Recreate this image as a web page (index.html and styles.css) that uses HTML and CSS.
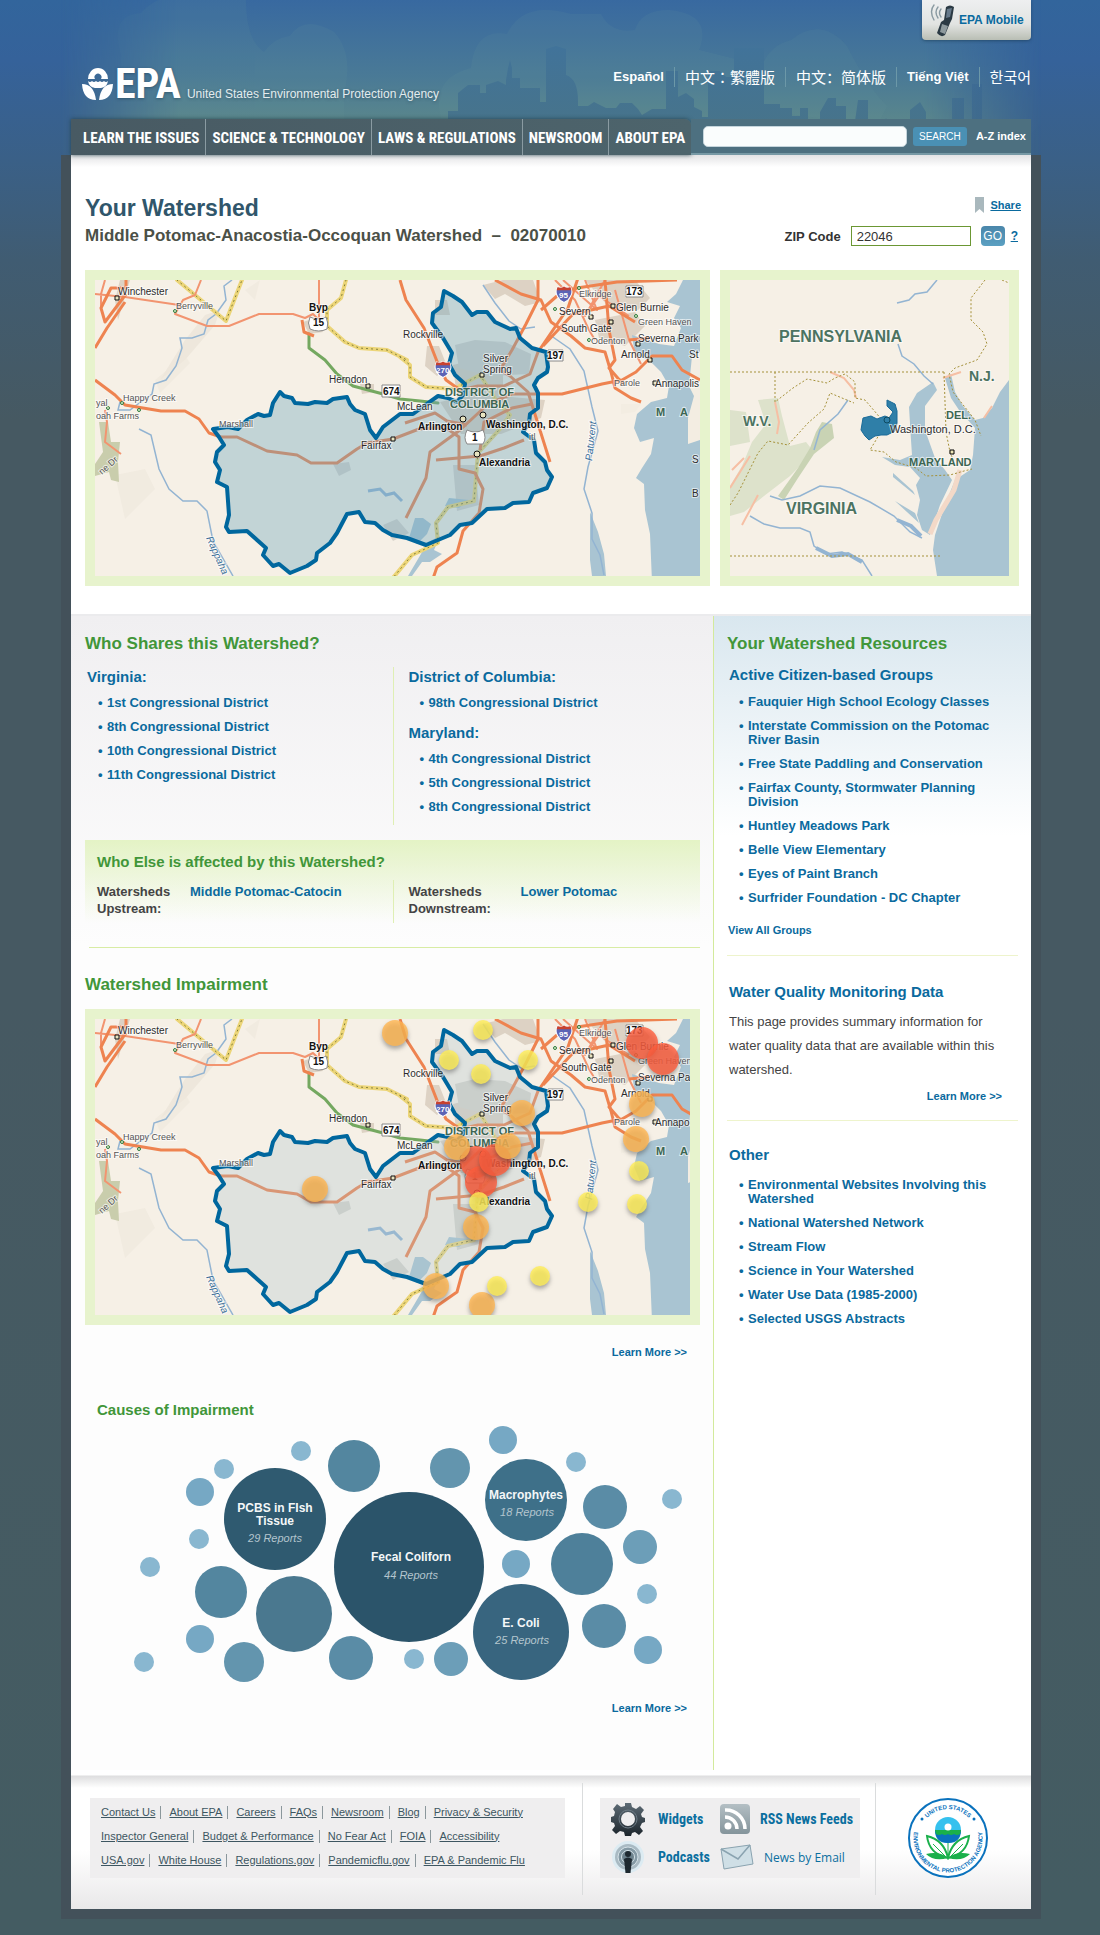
FILE: index.html
```html
<!DOCTYPE html>
<html lang="en">
<head>
<meta charset="utf-8">
<meta name="viewport" content="width=device-width, initial-scale=1">
<title>Your Watershed | US EPA</title>
<link rel="stylesheet" href="styles.css">
</head>
<body>
<svg class="defs" width="0" height="0" aria-hidden="true">
  <defs>
    <symbol id="shield" viewBox="0 0 16 16">
      <path d="M2 1q3 1.500 6-.5q3 2 6 .5q3 5 0 9q-2 4-6 5.500q-4-1.500-6-5.500q-3-4 0-9z" fill="#5b63b5" stroke="#fff"/>
      <path d="M2 1q3 1.500 6-.5q3 2 6 .5l1 3h-14z" fill="#c8412f"/>
    </symbol>
    <symbol id="basin" viewBox="0 0 605 296">
      <rect width="605" height="296" fill="#f6f0e6"/>
      <g fill="#e9e2d6" opacity=".6">
        <path d="M90 60l20-25 15-5-5 15-30 35-25 20z"/>
        <path d="M60 100l30-25 5 8-30 30zM20 195l30-6 10 20-30 30zM150 10l15-10-5 20z" opacity=".6"/>
      </g>
      <g fill="#ddd2c4">
        <path d="M20 20l5-20 10 0-12 40zM208 42l12-4 8 14-14 2zM340 20l12 0 3 15-15 0zM332 66l12 0 8 20-10 10-12-10zM388 5l20-5 30 0 8 22-16 4-20-12-10 5zM490 0l50 0 15 18-12 12-30-4zM500 40l40 -8 10 14-20 20-26-8zM358 85l20-5 30 10 0 20-20 25-25-8zM265 104l14 0 0 8-12 2zM345 122l35-8 70 6-4 18-40 16-40 0z"/>
      </g>
      <path d="M360 65l20-5 30 2 26 12-2 20-40 2-30-8zM358 185l22 0 4 40-22 6zM238 184l16-2 2 8-12 6zM288 245l14-6 12 14-16 8z" fill="#d9d4cb"/>
      <path d="M4 142l9 0 3 20 9 0-2 20 1 20-8-2-2-8-14 4v-12l8-12z" fill="#c9cdac"/>
      <g fill="#a9c4d2">
        <path d="M605 0h-17l-7 14-9 8 13 4-6 12 7 10-7 18-15-2-27-9 3 20 14 5 12 12 8 14-2 12-16 4-14 12-3 14 6 14 14-4-3 16-9 14-6 10 8 6 1 26 5 24 2 48h53z"/>
        <path d="M320 238l8 0 8 6-4 10-10 10-8-6zM333 262l12-6-6 14 8 4-12 8-8 0-10 14-4 0zM354 218l20 2-10 8-14-2zM495 232l8 20 6 22 2 22h-14l-2-16z"/>
      </g>
      <path d="M605 72l-8 4-3 30 5 10-6 22 0 26 12-4zM526 124l20 0-6 8-14 2z" fill="#f3ede2"/>
      <g fill="none" stroke="#93b4d2" stroke-width="1.500">
        <path d="M137 0l-8 6 2 14-10 14-8 6-4 14-12 4-12 0 2 10-6 18-10 14-12 4-2 10-14 10-8 6-12 0 2-8M44 149l12 6 8 34 10 20 14 12 14 0 10 10 6 30 20 35" />
        <path d="M388 5l12 18 14 18 12 8 14-2M455 55l20 14 14 22 8 36 6 24-10 36-4 22 8 24 0 26 8 16 4 20"/>
      </g>
      <path d="M273 211l12-2 6 6 8-2 8 8" fill="none" stroke="#93b4d2" stroke-width="3"/>
      <g fill="none" stroke-linejoin="round" stroke-linecap="round">
        <path d="M82 0l49 41 16-41M251 0l-5 18-14 12 0 16 18 16 14 6 28 2 20 10M305 77l10 8 0 12 16 10 28 2 26-14M385 95l18 28 12 12-10 14-22 24-4 48-26 6-12 16 2 20-26 12-30 36" stroke="#ecd578" stroke-width="4"/>
        <path d="M82 0l49 41 16-41M251 0l-5 18-14 12 0 16 18 16 14 6 28 2 20 10M305 77l10 8 0 12 16 10 28 2 26-14M385 95l18 28 12 12-10 14-22 24-4 48-26 6-12 16 2 20-26 12-30 36" stroke="#7d7a35" stroke-width="1" stroke-dasharray="1 4"/>
        <path d="M214 54l0 14 16 12 12 14 16 12 30 8 17 5 20 2 18 2" stroke="#74a860" stroke-width="3"/>
      </g>
      <g class="road-thin">
        <path d="M10 0l-4 14 0 14M106 0l-6 15-12 5-8 14 32 12 22 0 30-12 34 0 12 4 8 -4 6 6M0 14l30 3 54 8M224 0v38M10 130l2 12-2 20 16 12"/>
        <path d="M460 0l20 20 14 30 6 10M510 0l-20 36 14-20 30 20M520 10l14 50 12 24M468 0l34 30-12-30"/>
      </g>
      <g class="road">
        <path d="M31 0l0 8-15 0-10 20 4 14 21-28M0 68l12-20 18-26M0 100l20 15 10 10 36 6 24 0 14 8 10 14 12 4 16 0 30 14 30 4 14 8 26 0 20-14 10-6 26-4 26-10 26-2 14 10 0 32 16 4 8 16-4 24-16 18-6 22-20 14-16 46"/>
        <path d="M207 40l2 12 10 4M305 0l6 20 18 28 14 36 8 16 14 10 18-4 26 0 26-12 8-22 30-44 10-30M400 0l26 14 20 6 10 22 20 14 14 12 20 4 6 20 4 16 16 10 10 4M443 0l0 20-12 24-14 26-12 20 10 6 18 16 22 70"/>
        <path d="M605 100l-18-10-10-14-20 0-16 16-14 8-20 4-40 10-50 0-24 10-28 26-30 22-4 26-10 20-10 20M341 180l44-4 24-8 20-8M372 145l-20-4-12-8-30 10M385 170l4-28 28-14 20-4M446 30l16-14 20-8 40-6 60-2M510 0l4 50 6 30-6 8 14 16M534 60l20-2M448 66l30-32 36-8 26 16"/>
      </g>
      <path fill="currentColor" stroke="#00679e" stroke-width="4" stroke-linejoin="round" d="M118 149l15-2 10 2 9-9 11-6 6 2 6-1 3-12 7-11 4 4 8 2 3 5 13 1 7-2 12 1 6-4 14-2 3 7 5 6 10 4 5 16 6 8 7-11 17-13h13l15-11 10-7 10 2 9 4 6-7 2-11-10-9-6-11 3-11-9-15-11-15 1-10 8-6 3-16 9 5 9 6 10 13 5-3h10l8 10 15 7 6-1 4 10 12 10 14 4 2 15-1 5-9 6-4 7 4 8v15l-8 6-1 9-6 9 11 8 2 13 9 9 2 8 5 7-5 11-14 5-4 9-16 1-8 5-18 1-15 14-12 2-10 10-24 10-19-7-15-3-9-5-8-7-10-1-6-10-12 2-10 19-7 10-13 10-1 7-9 6-17 7-11-9-6 2-10-11 3-7-19-17-18 1-3-5 3-12-2-28-10-5 3-12-5-8 2-10 7-7-5-8z"/>
    </symbol>
    <path id="ring-top" d="M-29 0a29 29 0 0 1 58 0"/>
    <path id="ring-bottom" d="M-28.300 -19.800a34.500 34.500 0 1 0 56.600 0"/>
    <linearGradient id="metal" x1="0" y1="0" x2="0" y2="1"><stop offset="0" stop-color="#5d6b75"/><stop offset="1" stop-color="#1c252c"/></linearGradient>
    <linearGradient id="silver" x1="0" y1="0" x2="0" y2="1"><stop offset="0" stop-color="#b4bfc4"/><stop offset="1" stop-color="#84949b"/></linearGradient>
  </defs>
</svg>

<div class="page">
  <header class="masthead">
    <svg class="sky" viewBox="0 0 980 155" preserveAspectRatio="none" aria-hidden="true">
      <defs>
        <linearGradient id="glow" x1="0" y1="0" x2="0" y2="1"><stop offset="0" stop-color="#3869a0"/><stop offset=".5" stop-color="#4a7a96"/><stop offset=".8" stop-color="#5b878b"/><stop offset="1" stop-color="#557f88"/></linearGradient>
        <linearGradient id="bldg" x1="0" y1="0" x2="0" y2="1"><stop offset="0" stop-color="#41739a"/><stop offset="1" stop-color="#4a7483"/></linearGradient>
      </defs>
      <rect width="980" height="155" fill="url(#glow)"/>
      <g fill="#6f9f9e" opacity=".1">
        <path d="M60 155v-100q-12-40 20-42q20-24 60-13h45q0 40 18 52q10-14 26-16q14-22 44-4q20 22 10 60v63z"/>
        <path d="M380 118q-10-40 30-50q4-40 36-34q16-34 64-20h30q10 20 34 16q6-20 34-20q44 4 30 40l40 10 10 60z"/>
        <path d="M700 110q-10-60 30-70q30-24 56 6q20 40 40 60l-10 20z"/>
      </g>
      <path fill="url(#bldg)" d="M387 119v-8h10v-18l10-8h12v8h6v-8l12-4 8 4v-5l2-12 2-8 2 8v10h8v10h20v14h6v-53l10-3 10 3v26q12 4 12 26v5h10l6-4 12 6h10l4-5h12l6 6 4 6 10-6h14v-38h12v26l8-4 8 6v8l8 4v6h6v-46h12l6 6h8v-29h30v56h16v4h12v8h8v-8h8v16h12v-12l8-14h8v8h10v22h8l4-28h10v28h14l4-10 6 14h18v-22l10-8 6 10v20h14v-6h12v-28h12v28h8v-42h10v36l12 6v12h12l4-10v-8h14l6 14 10-10 8 14h12v-10l30 12v24h-620z"/>
    </svg>
    <a class="mobile-tab" href="#">
      <svg width="26" height="34" viewBox="0 0 26 34" aria-hidden="true">
        <g fill="none" stroke="#8a9aa2" stroke-width="1.400" stroke-linecap="round"><path d="M5 2q-5 6 0 15M9 4q-4 5 0 11M12 6q-3 4 0 8"/></g>
        <path d="M17 4q4-3 8 0l-2 12-2 4-5 12q-4 3-8-2l4-11 3-2z" fill="#2b3a44"/>
        <path d="M18 6l5-1-2 9-4 1z" fill="#66798a"/><path d="M13 21l6 2-3 8-5-2z" fill="#8e9a9e"/>
      </svg>
      EPA Mobile
    </a>
    <div class="brand-row">
      <a class="brand" href="#">
        <svg width="31" height="32" viewBox="0 0 31 32" aria-hidden="true" fill="#fff">
          <path d="M6 11a10 11 0 0 1 20 0h-7a3.500 3.500 0 1 0-6 0z"/>
          <path d="M6 13q2 2 4 0q2 2 4 0q2 2 4 0q2 2 4 0q2 2 4 0q-1 6-7 7h-6q-6-1-7-7z"/>
          <path d="M0 16q12 0 14 16q-13 0-14-16zM31 16q-12 0-14 16q13 0 14-16z"/>
        </svg>
        <span class="wordmark">EPA</span>
        <span class="tagline">United States Environmental Protection Agency</span>
      </a>
      <ul class="languages">
        <li><a href="#" lang="es">Español</a></li>
        <li class="cjk"><a href="#" lang="zh-Hant">中文：繁體版</a></li>
        <li class="cjk"><a href="#" lang="zh-Hans">中文：简体版</a></li>
        <li><a href="#" lang="vi">Tiếng Việt</a></li>
        <li class="cjk"><a href="#" lang="ko">한국어</a></li>
      </ul>
    </div>
    <div class="nav-row">
      <nav class="main-nav">
        <a href="#">LEARN THE ISSUES</a>
        <a href="#">SCIENCE &amp; TECHNOLOGY</a>
        <a href="#">LAWS &amp; REGULATIONS</a>
        <a href="#">NEWSROOM</a>
        <a href="#">ABOUT EPA</a>
      </nav>
      <form class="search">
        <input type="text" aria-label="Search">
        <button type="button">SEARCH</button>
        <a href="#">A-Z index</a>
      </form>
    </div>
  </header>

  <div class="sheet">
    <main>
      <section class="intro">
        <div class="title-row">
          <h1>Your Watershed</h1>
          <a class="share" href="#"><svg width="9" height="16" viewBox="0 0 9 16" aria-hidden="true"><path d="M0 0h9v16l-4.500-4-4.500 4z" fill="#a9b8bd"/></svg><span>Share</span></a>
        </div>
        <div class="title-row">
          <p class="subtitle">Middle Potomac-Anacostia-Occoquan Watershed&nbsp; –&nbsp; 02070010</p>
          <form class="zip">
            <label for="zip">ZIP Code</label>
            <input id="zip" type="text" value="22046">
            <button type="button">GO</button>
            <a href="#">?</a>
          </form>
        </div>
        <div class="maps">
          <div class="frame">
            <svg viewBox="0 0 605 296" preserveAspectRatio="xMinYMin slice" class="map tint-strong" role="img" aria-label="Watershed map">
              <use href="#basin" width="605" height="296"/>
              <g class="badges">
                <path d="M215 37q8 4 16 0q3 6 1 12q-8 4-17 0q-3-6 0-12zM287 105h18v12h-18zM372 150q8 4 16 0q4 8 0 14h-16q-4-6 0-14zM531 6h17v11h-17zM453 70h15v11h-15z"/>
              </g>
              <use href="#shield" x="460" y="6" width="18" height="17"/><use href="#shield" x="339" y="81" width="18" height="17"/>
              <g class="dots"><path d="M20 16h4v4h-4zM271 104h4v4h-4zM296 157h4v4h-4zM385 93h4v4h-4zM494 35h4v4h-4zM516 24h4v4h-4zM514 40h4v4h-4zM541 62h4v4h-4zM553 78h4v4h-4zM558 101h4v4h-4z"/><circle cx="368" cy="139" r="3"/><circle cx="388" cy="135" r="3"/><circle cx="382" cy="174" r="3"/></g>
              <g class="dots small"><circle cx="80" cy="31" r="1.500"/><circle cx="27" cy="123" r="1.500"/><circle cx="13" cy="128" r="1.500"/><circle cx="44" cy="130" r="1.500"/><circle cx="460" cy="29" r="1.500"/><circle cx="484" cy="8" r="1.500"/><circle cx="541" cy="36" r="1.500"/><circle cx="494" cy="60" r="1.500"/></g>
              <g class="town">
                <text x="23" y="15">Winchester</text><text x="234" y="103">Herndon</text><text x="308" y="58">Rockville</text>
                <text x="388" y="82">Silver</text><text x="388" y="93">Spring</text><text x="464" y="35">Severn</text><text x="466" y="52">South Gate</text>
                <text x="521" y="31">Glen Burnie</text><text x="543" y="62">Severna Park</text><text x="526" y="78">Arnold</text><text x="560" y="107">Annapolis</text>
                <text x="302" y="130">McLean</text><text x="266" y="169">Fairfax</text><text x="594" y="78">St</text><text x="597" y="183">S</text><text x="597" y="217">B</text>
              </g>
              <g class="hamlet">
                <text x="81" y="29">Berryville</text><text x="28" y="121">Happy Creek</text><text x="1" y="126">yal</text><text x="1" y="139">oah Farms</text>
                <text x="124" y="147">Marshall</text><text x="484" y="17">Elkridge</text><text x="543" y="45">Green Haven</text><text x="496" y="64">Odenton</text><text x="519" y="106">Parole</text><text x="434" y="160">itl</text>
              </g>
              <g class="city">
                <text x="214" y="31">Byp</text><text x="218" y="46">15</text><text x="288" y="115">674</text><text x="531" y="15">173</text><text x="452" y="79">197</text><text x="377" y="161">1</text>
                <text x="323" y="150">Arlington</text><text x="391" y="148">Washington, D.C.</text><text x="384" y="186">Alexandria</text>
                <text x="464" y="18" class="on-shield">95</text><text x="341" y="93" class="on-shield">270</text>
              </g>
              <g class="state"><text x="350" y="116">DISTRICT OF</text><text x="355" y="128">COLUMBIA</text><text x="561" y="136">M</text><text x="585" y="136">A</text></g>
              <g class="river"><text transform="translate(111 258) rotate(66)">Rappaha</text><text transform="translate(497 181) rotate(-84)">Patuxent</text></g>
              <text class="hamlet" transform="translate(7 195) rotate(-42)">ne Dr</text>
            </svg>
          </div>
          <div class="frame">
            <svg viewBox="0 0 279 296" preserveAspectRatio="xMinYMin slice" class="map" role="img" aria-label="Regional map">
              <rect width="279" height="296" fill="#f6f0e6"/>
              <path d="M28 120l20-2 4 18 8 30 16-4 8 10-24 24-26 20-20 16-14 4v-30l12-20 10-24 14-18zM0 130l16 2 4 30-20 4z" fill="#dde2cb"/>
              <path d="M92 142l10 2 2 14-20 16-16 24-14 22-6-4 20-28 12-20 6-16z" fill="#c9d3b4"/>
              <path d="M203 102l-16 11-8 14 2 33 1 15-12 5-18-3 13 8 15 2 10 11-4 7 4 15-3 15 5 15 8 5 10-30 12-25-7-10-10-12-10-28 0-24 12-16zM279 100l-9 12-8 16-9 10-8 2-12-14-8-14-4-18-6 4 6 20 8 12 16 18-2 27-3 15-15 10-10 25-10 30-2 15 4 26h72zM163 193l20 18 2 4-22-18zM165 221l20 12 4 10z" fill="#a9c4d2"/>
              <path d="M230 190l-6 20-18 30-6 14" fill="none" stroke="#f3d9c8" stroke-width="5"/>
              <g fill="none" stroke="#93b4d2" stroke-width="1.500">
                <path d="M207 0l-10 12-12 2-6 6-12 3M168 64l4 12 12 8 10 12 9 8M118 120l-10 14-18 16-6 20M40 216l12 4 18-4 20-10 20 2 30 14 24 14 16 16 12 6M20 236l14 8 16 4 20 0 10 4 4 14 12 8 16-2 20 8 10 16"/>
              </g>
              <path d="M86 268l16 8 16-2 14 8M167 240l14 6 10 10" fill="none" stroke="#93b4d2" stroke-width="4"/>
              <g fill="none" stroke="#f6bfa4" stroke-width="2"><path d="M100 92l14 6 10 12 2 8M45 122l4 20-2 12M213 98l18-6M0 208l20-32M2 190l12-12M28 215l-16 30M254 138l8-12"/></g>
              <g class="border-line">
                <path d="M0 92h214M45 92v30l18-14 14-9 20 4 8-5 10-4 10 8 0 16 10 2 12 14 8 10M0 225l8-12 20-40 10-12 20 4 20-22 16-14 6-16 24 10M214 92l2 60 4 20 4 10M255 0l-14 18 0 22 12 12 4 12-10 16-22 8-6 6 4 18 22 28 6 16M152 150l-12 20 14 2 12 10 20 6 10 8 24-1 14-4 8-2M0 276h210M272 0l7 3"/>
              </g>
              <path d="M133 138l8-2 6 3 8-3 4 2 4-6-6-6 0-6 8 4 2 7 0 12-2 8-8 4-6 0-6 1-6 4-4-4-4-6z" fill="#2f7fa8" stroke="#1a6a98"/>
              <circle cx="157" cy="140" r="3" fill="none" stroke="#0e4a60"/><path d="M220 170h4v4h-4z" fill="#efe9b8" stroke="#000"/>
              <g class="region"><text x="49" y="62">PENNSYLVANIA</text><text x="56" y="234">VIRGINIA</text></g>
              <g class="region small"><text x="239" y="101">N.J.</text><text x="13" y="146">W.V.</text></g>
              <g class="state"><text x="216" y="139">DEL.</text><text x="179" y="186">MARYLAND</text></g>
              <text class="town capital" x="160" y="153">Washington, D.C.</text>
            </svg>
          </div>
        </div>
      </section>

      <div class="columns">
        <div class="primary">
          <h2>Who Shares this Watershed?</h2>
          <div class="districts">
            <div>
              <h3>Virginia:</h3>
              <ul class="links">
                <li><a href="#">1st Congressional District</a></li>
                <li><a href="#">8th Congressional District</a></li>
                <li><a href="#">10th Congressional District</a></li>
                <li><a href="#">11th Congressional District</a></li>
              </ul>
            </div>
            <div>
              <h3>District of Columbia:</h3>
              <ul class="links"><li><a href="#">98th Congressional District</a></li></ul>
              <h3 class="next">Maryland:</h3>
              <ul class="links">
                <li><a href="#">4th Congressional District</a></li>
                <li><a href="#">5th Congressional District</a></li>
                <li><a href="#">8th Congressional District</a></li>
              </ul>
            </div>
          </div>
          <section class="affected">
            <h3>Who Else is affected by this Watershed?</h3>
            <div class="streams">
              <dl><dt>Watersheds Upstream:</dt><dd><a href="#">Middle Potomac-Catocin</a></dd></dl>
              <dl class="down"><dt>Watersheds Downstream:</dt><dd><a href="#">Lower Potomac</a></dd></dl>
            </div>
          </section>
          <hr>
          <h2>Watershed Impairment</h2>
          <div class="frame impairment">
            <svg viewBox="0 0 596 296" preserveAspectRatio="xMinYMin slice" class="map tint-soft" role="img" aria-label="Impairment map">
              <use href="#basin" width="605" height="296"/>
              <g class="badges">
                <path d="M215 37q8 4 16 0q3 6 1 12q-8 4-17 0q-3-6 0-12zM287 105h18v12h-18zM372 150q8 4 16 0q4 8 0 14h-16q-4-6 0-14zM531 6h17v11h-17zM453 70h15v11h-15z"/>
              </g>
              <use href="#shield" x="460" y="6" width="18" height="17"/><use href="#shield" x="339" y="81" width="18" height="17"/>
              <g class="dots"><path d="M20 16h4v4h-4zM271 104h4v4h-4zM296 157h4v4h-4zM385 93h4v4h-4zM494 35h4v4h-4zM516 24h4v4h-4zM514 40h4v4h-4zM541 62h4v4h-4zM553 78h4v4h-4zM558 101h4v4h-4z"/><circle cx="368" cy="139" r="3"/><circle cx="388" cy="135" r="3"/><circle cx="382" cy="174" r="3"/></g>
              <g class="dots small"><circle cx="80" cy="31" r="1.500"/><circle cx="27" cy="123" r="1.500"/><circle cx="13" cy="128" r="1.500"/><circle cx="44" cy="130" r="1.500"/><circle cx="460" cy="29" r="1.500"/><circle cx="484" cy="8" r="1.500"/><circle cx="541" cy="36" r="1.500"/><circle cx="494" cy="60" r="1.500"/></g>
              <g class="town">
                <text x="23" y="15">Winchester</text><text x="234" y="103">Herndon</text><text x="308" y="58">Rockville</text>
                <text x="388" y="82">Silver</text><text x="388" y="93">Spring</text><text x="464" y="35">Severn</text><text x="466" y="52">South Gate</text>
                <text x="521" y="31">Glen Burnie</text><text x="543" y="62">Severna Pa</text><text x="526" y="78">Arnold</text><text x="560" y="107">Annapo</text>
                <text x="302" y="130">McLean</text><text x="266" y="169">Fairfax</text>
              </g>
              <g class="hamlet">
                <text x="81" y="29">Berryville</text><text x="28" y="121">Happy Creek</text><text x="1" y="126">yal</text><text x="1" y="139">oah Farms</text>
                <text x="124" y="147">Marshall</text><text x="484" y="17">Elkridge</text><text x="543" y="45">Green Haven</text><text x="496" y="64">Odenton</text><text x="519" y="106">Parole</text><text x="434" y="160">itl</text>
              </g>
              <g class="city">
                <text x="214" y="31">Byp</text><text x="218" y="46">15</text><text x="288" y="115">674</text><text x="531" y="15">173</text><text x="452" y="79">197</text><text x="377" y="161">1</text>
                <text x="323" y="150">Arlington</text><text x="391" y="148">Washington, D.C.</text><text x="384" y="186">Alexandria</text>
                <text x="464" y="18" class="on-shield">95</text><text x="341" y="93" class="on-shield">270</text>
              </g>
              <g class="state"><text x="350" y="116">DISTRICT OF</text><text x="355" y="128">COLUMBIA</text><text x="561" y="136">M</text><text x="585" y="136">A</text></g>
              <g class="river"><text transform="translate(111 258) rotate(66)">Rappaha</text><text transform="translate(497 181) rotate(-84)">Patuxent</text></g>
              <text class="hamlet" transform="translate(7 195) rotate(-42)">ne Dr</text>
              <g class="pins">
                <g class="high"><circle cx="547" cy="24" r="16"/><circle cx="568" cy="40" r="16"/><circle cx="381" cy="143" r="16"/><circle cx="386" cy="163" r="16"/><circle cx="400" cy="141" r="16"/></g>
                <g class="mid"><circle cx="300" cy="14" r="13"/><circle cx="220" cy="170" r="13"/><circle cx="427" cy="94" r="13"/><circle cx="362" cy="128" r="13"/><circle cx="413" cy="127" r="13"/><circle cx="547" cy="85" r="13"/><circle cx="541" cy="120" r="13"/><circle cx="381" cy="208" r="13"/><circle cx="341" cy="267" r="13"/><circle cx="387" cy="286" r="13"/></g>
                <g class="low"><circle cx="388" cy="11" r="10"/><circle cx="354" cy="41" r="10"/><circle cx="386" cy="55" r="10"/><circle cx="433" cy="41" r="10"/><circle cx="384" cy="183" r="10"/><circle cx="493" cy="183" r="10"/><circle cx="544" cy="152" r="10"/><circle cx="542" cy="185" r="10"/><circle cx="445" cy="257" r="10"/><circle cx="402" cy="267" r="10"/></g>
              </g>
            </svg>
          </div>
          <p class="more after-map"><a href="#">Learn More &gt;&gt;</a></p>
          <h3 class="causes">Causes of Impairment</h3>
          <svg class="bubbles" viewBox="0 0 615 270" role="img" aria-label="Causes of impairment by number of reports">
            <g fill="#89b7d0"><circle cx="139" cy="49" r="10"/><circle cx="216" cy="31" r="10"/><circle cx="491" cy="42" r="10"/><circle cx="587" cy="79" r="10"/><circle cx="562" cy="174" r="10"/><circle cx="329" cy="239" r="10"/><circle cx="114" cy="119" r="10"/><circle cx="65" cy="147" r="10"/><circle cx="59" cy="242" r="10"/></g>
            <g fill="#76a8c4"><circle cx="115" cy="72" r="14"/><circle cx="418" cy="20" r="14"/><circle cx="563" cy="230" r="14"/><circle cx="431" cy="144" r="14"/><circle cx="115" cy="219" r="14"/></g>
            <g fill="#6c9eb8"><circle cx="555" cy="127" r="17"/><circle cx="366" cy="239" r="17"/></g>
            <g fill="#6395ae"><circle cx="365" cy="48" r="20"/><circle cx="159" cy="242" r="20"/></g>
            <g fill="#5a8ca6"><circle cx="520" cy="87" r="22"/><circle cx="519" cy="206" r="22"/><circle cx="266" cy="238" r="22"/></g>
            <g fill="#53869f"><circle cx="269" cy="46" r="26"/><circle cx="136" cy="172" r="26"/></g>
            <circle cx="497" cy="144" r="31" fill="#4e809a"/><circle cx="209" cy="194" r="38" fill="#4a788f"/>
            <circle cx="441" cy="80" r="41" fill="#3e7089"/><circle cx="436" cy="212" r="48" fill="#38657f"/>
            <circle cx="190" cy="99" r="51" fill="#2f5a70"/><circle cx="324" cy="147" r="75" fill="#2b546a"/>
            <g class="cause"><text x="190" y="92">PCBS in FIsh</text><text x="190" y="105">Tissue</text><text x="326" y="141">Fecal Coliforn</text><text x="441" y="79">Macrophytes</text><text x="436" y="207">E. Coli</text></g>
            <g class="count"><text x="190" y="122">29 Reports</text><text x="326" y="159">44 Reports</text><text x="442" y="96">18 Reports</text><text x="437" y="224">25 Reports</text></g>
          </svg>
          <p class="more"><a href="#">Learn More &gt;&gt;</a></p>
        </div>

        <aside class="resources">
          <h2>Your Watershed Resources</h2>
          <h3 class="groups">Active Citizen-based Groups</h3>
          <ul class="links">
            <li><a href="#">Fauquier High School Ecology Classes</a></li>
            <li><a href="#">Interstate Commission on the Potomac River Basin</a></li>
            <li><a href="#">Free State Paddling and Conservation</a></li>
            <li><a href="#">Fairfax County, Stormwater Planning Division</a></li>
            <li><a href="#">Huntley Meadows Park</a></li>
            <li><a href="#">Belle View Elementary</a></li>
            <li><a href="#">Eyes of Paint Branch</a></li>
            <li><a href="#">Surfrider Foundation - DC Chapter</a></li>
          </ul>
          <p class="view-all"><a href="#">View All Groups</a></p>
          <hr>
          <h3>Water Quality Monitoring Data</h3>
          <p class="summary">This page provides summary information for water quality data that are available within this watershed.</p>
          <p class="more"><a href="#">Learn More &gt;&gt;</a></p>
          <hr>
          <h3 class="other">Other</h3>
          <ul class="links">
            <li><a href="#">Environmental Websites Involving this Watershed</a></li>
            <li><a href="#">National Watershed Network</a></li>
            <li><a href="#">Stream Flow</a></li>
            <li><a href="#">Science in Your Watershed</a></li>
            <li><a href="#">Water Use Data (1985-2000)</a></li>
            <li><a href="#">Selected USGS Abstracts</a></li>
          </ul>
        </aside>
      </div>
    </main>

    <footer class="footer">
      <nav class="panel site-links">
        <ul><li><a href="#">Contact Us</a></li><li><a href="#">About EPA</a></li><li><a href="#">Careers</a></li><li><a href="#">FAQs</a></li><li><a href="#">Newsroom</a></li><li><a href="#">Blog</a></li><li><a href="#">Privacy &amp; Security</a></li></ul>
        <ul><li><a href="#">Inspector General</a></li><li><a href="#">Budget &amp; Performance</a></li><li><a href="#">No Fear Act</a></li><li><a href="#">FOIA</a></li><li><a href="#">Accessibility</a></li></ul>
        <ul><li><a href="#">USA.gov</a></li><li><a href="#">White House</a></li><li><a href="#">Regulations.gov</a></li><li><a href="#">Pandemicflu.gov</a></li><li><a href="#">EPA &amp; Pandemic Flu</a></li></ul>
      </nav>
      <div class="follow">
        <div class="panel follow-grid">
          <a href="#"><svg width="34" height="34" viewBox="-17 -17 34 34" aria-hidden="true"><path fill="url(#metal)" fill-rule="evenodd" d="M-3-16h6l1 4 4 2 4-3 4 4-3 4 1 3 3 1v4l-3 1-2 4 3 4-4 4-4-3-3 1-1 3h-6l-1-4-4-1-4 3-4-4 3-4-1-3-3-1v-5l3-1 1-4-2-3 4-5 4 3 4-1zM-7 0a7 7 0 1 0 14 0a7 7 0 1 0-14 0z"/><circle r="9" fill="none" stroke="#6d7b85"/></svg><span>Widgets</span></a>
          <a href="#"><svg width="30" height="30" viewBox="0 0 30 30" aria-hidden="true"><rect width="30" height="30" rx="4" fill="url(#silver)"/><circle cx="8" cy="22" r="3.500" fill="#fff"/><path d="M5 13a12 12 0 0 1 12 12M5 6a19 19 0 0 1 20 19" fill="none" stroke="#fff" stroke-width="3.500"/></svg><span>RSS News Feeds</span></a>
          <a href="#"><svg width="34" height="34" viewBox="-17 -17 34 34" aria-hidden="true"><circle r="16" fill="#dcebf2"/><circle r="13" fill="#a9bac3"/><circle r="10" fill="#8499a4" stroke="#d5e2e8"/><circle r="6.500" fill="#6c818c" stroke="#d5e2e8"/><circle cy="-3" r="3" fill="#1e2930"/><path d="M-4 2q4-3 8 0l-1.500 14h-5z" fill="#1e2930"/></svg><span>Podcasts</span></a>
          <a href="#" class="email"><svg width="34" height="26" viewBox="0 0 34 26" aria-hidden="true"><path d="M1 5l29-4 3 19-29 5z" fill="#cfdfe6" stroke="#8aa3b0"/><path d="M1 5l17 10 12-14" fill="none" stroke="#8aa3b0" stroke-width="1.500"/></svg><span>News by Email</span></a>
        </div>
      </div>
      <a class="seal" href="#" aria-label="EPA seal">
        <svg width="80" height="80" viewBox="-40 -40 80 80">
          <circle r="39" fill="#fff" stroke="#0a72bd" stroke-width="2"/>
          <g class="seal-text"><text><textPath href="#ring-top" startOffset="50%">UNITED STATES</textPath></text><text><textPath href="#ring-bottom" startOffset="50%">ENVIRONMENTAL PROTECTION AGENCY</textPath></text></g>
          <circle cx="-26" cy="-19" r="1.500" fill="#0a72bd"/><circle cx="26" cy="-19" r="1.500" fill="#0a72bd"/>
          <circle cy="-8" r="13" fill="#35c1ee"/><path d="M-13-8h26q0 13-13 13t-13-13z" fill="#0a72bd"/><path d="M-13-8h26l-1 4q-3 2-6 0q-3 2-6 0q-3 2-6 0q-3 2-6 0z" fill="#1ab04b"/><circle cy="-11" r="3.500" fill="#fff"/>
          <path d="M0 20Q-19 16-21-2Q-4 2 0 20Q4 2 21-2Q19 16 0 20z" fill="#fff" stroke="#1ab04b" stroke-width="2"/>
          <path d="M0 20q-8-7-22-4q8 8 22 4q8-7 22-4q-8 8-22 4z" fill="#1ab04b"/><path d="M0 5v17M-1 20l-14-14M1 20l14-14" stroke="#1ab04b"/>
        </svg>
      </a>
    </footer>
  </div>
</div>
</body>
</html>
```
FILE: styles.css
```css
* { box-sizing: border-box; }

body {
  margin: 0;
  padding: 0 59px 16px 61px;
  font-family: "Liberation Sans", Arial, sans-serif;
  font-size: 13px;
  color: #444;
  background: linear-gradient(#32659c 0, #35629a 60px, #3a6087 160px, #405c72 260px, #465962 420px, #465962 1000px, #445c62 1900px);
}

h1, h2, h3, p, ul, dl, dd { margin: 0; padding: 0; }
ul { list-style: none; }
a { color: #0a6a9e; text-decoration: none; }
button { border: 0; padding: 0; font-family: inherit; cursor: pointer; }
.defs { position: absolute; }

.page { max-width: 980px; margin: 0 auto; }

/* Masthead */
.masthead { position: relative; padding: 0 10px; }
.sky {
  position: absolute;
  inset: 0;
  width: 100%;
  height: 100%;
  -webkit-mask-image: linear-gradient(90deg, transparent, #000 12%, #000 88%, transparent);
  mask-image: linear-gradient(90deg, transparent, #000 12%, #000 88%, transparent);
}
.mobile-tab {
  position: relative;
  display: flex;
  align-items: center;
  gap: 4px;
  width: 109px;
  height: 40px;
  margin-left: auto;
  padding: 0 7px 0 7px;
  border-radius: 0 0 4px 4px;
  background: linear-gradient(#eeeff0, #e2e4e2 60%, #b9beb4);
  box-shadow: 0 1px 3px rgba(20, 50, 70, .5);
  font-size: 12px;
  font-weight: bold;
  white-space: nowrap;
}
.brand-row {
  position: relative;
  display: flex;
  justify-content: space-between;
  height: 79px;
  padding-left: 11px;
}
.brand { display: flex; align-items: flex-end; height: 60px; color: #fff; white-space: nowrap; text-shadow: 0 1px 3px rgba(30, 60, 80, .5); }
.wordmark { margin-left: 2px; font-family: "Roboto Condensed", "Liberation Sans", sans-serif; font-size: 42px; line-height: 40px; height: 36px; font-weight: bold; }
.tagline { margin-left: 6px; color: #e3ecee; font-size: 12px; line-height: 12px; }
.languages { display: flex; margin-top: 27px; height: 20px; line-height: 20px; white-space: nowrap; }
.languages li { padding-left: 10px; }
.languages li + li { border-left: 1px solid #6c98a8; }
.languages li:not(:last-child) { padding-right: 10px; }
.languages a { color: #fff; font-weight: bold; font-size: 13px; }
.languages .cjk a { font-family: "Noto Sans CJK TC", sans-serif; font-weight: 400; font-size: 15px; }
.nav-row { position: relative; display: flex; height: 36px; }
.main-nav {
  display: flex;
  align-items: stretch;
  padding-left: 6px;
  border-radius: 0 6px 0 0;
  background: linear-gradient(90deg, #485a63, #4d646c);
  box-shadow: 0 0 4px rgba(30, 60, 70, .8);
}
.main-nav a {
  padding: 0 6px;
  color: #fff;
  font-family: "Roboto Condensed", "Liberation Sans", sans-serif;
  font-size: 15px;
  line-height: 38px;
  font-weight: bold;
  white-space: nowrap;
}
.main-nav a + a { border-left: 1px solid #8a9ba2; }
.search { display: flex; flex: 1; align-items: center; gap: 6px; padding: 0 5px 0 12px; border-bottom: 2px solid #7799a5; background: #4d7080; }
.search input { flex: 1; min-width: 0; height: 21px; border: 1px solid #c5d5dc; border-radius: 5px; background: #fafdfd; }
.search button { width: 54px; height: 19px; border-radius: 3px; background: #4a90b4; color: #fff; font-size: 10px; }
.search a { margin-left: 3px; color: #fff; font-size: 11px; font-weight: bold; white-space: nowrap; }

/* Sheet */
.sheet { border: solid #43515a; border-width: 0 10px 10px; }
main { background: #fff; }
.intro { padding: 39px 12px 28px 14px; background: linear-gradient(#e3e3e5 0, #fff 12px); }
.title-row { display: flex; justify-content: space-between; align-items: center; }
h1 { color: #30566b; font-size: 23px; line-height: 28px; }
.share { display: flex; align-items: center; gap: 6px; margin: -6px -2px 0 0; font-size: 11px; font-weight: bold; text-decoration: underline; }
.subtitle { color: #4b5047; font-size: 17px; font-weight: bold; line-height: 28px; white-space: nowrap; }
.zip { display: flex; align-items: center; gap: 10px; color: #333; font-weight: bold; white-space: nowrap; }
.zip input { width: 120px; height: 20px; padding: 0 5px; border: 1px solid #6b9733; background: #fff; color: #333; font: 13px "Liberation Sans", Arial, sans-serif; }
.zip button { width: 24px; height: 20px; border-radius: 4px; background: linear-gradient(#4a86aa, #5ba0c2); color: #fff; font-size: 12px; }
.zip a { margin: 0 1px 0 -4px; font-size: 12px; text-decoration: underline; }
.maps { display: grid; grid-template-columns: minmax(0, 625fr) minmax(0, 299fr); gap: 10px; margin-top: 20px; }
.frame { padding: 10px; background: #e7f3cd; }
.map { display: block; width: 100%; height: 296px; }

/* Map parts */
.tint-strong { color: rgba(110, 165, 190, .38); }
.tint-soft { color: rgba(170, 195, 205, .3); }
.road { fill: none; stroke: #ee8350; stroke-width: 3; stroke-linejoin: round; }
.road-thin { fill: none; stroke: #f29470; stroke-width: 2; stroke-linejoin: round; }
.badges { fill: #fff; stroke: #888; }
.dots { fill: #e8e4c0; stroke: #111; stroke-width: 1; }
.dots.small { fill: #dff0d0; stroke: #2c7a3c; }
.map text { paint-order: stroke; stroke: rgba(255, 255, 255, .6); stroke-width: 2px; }
.town { fill: #2c2c2c; font-size: 10px; }
.hamlet { fill: #555; font-size: 9px; }
.city { fill: #111; font-size: 10px; font-weight: bold; }
.capital { font-size: 11px; }
.map .on-shield { fill: #fff; font-size: 8px; stroke: none; }
.state { fill: #3c6653; font-size: 11px; font-weight: bold; }
.river { fill: #3a6e98; font-size: 10px; font-style: italic; }
.region { fill: #4c7361; font-size: 16px; font-weight: bold; }
.region.small { font-size: 14px; }
.border-line { fill: none; stroke: #a5913a; stroke-width: 1; stroke-dasharray: 2 2; }
.pins circle { fill-opacity: .8; filter: drop-shadow(0 3px 2px rgba(60, 60, 60, .5)); }
.high { fill: #ff5c3c; }
.mid { fill: #ffb550; }
.low { fill: #ffee55; }

/* Columns */
.columns { display: grid; grid-template-columns: minmax(0, 642fr) minmax(0, 318fr); border-top: 2px solid #ebebed; }
.primary { padding: 16px 13px 52px 14px; background: linear-gradient(#f0eff1 0, #fdfdfd 330px); }
.resources { padding: 16px 13px 20px; border-left: 1px solid #d3ea9c; background: linear-gradient(#d9e7ef 0, #fff 220px); }
h2 { color: #419639; font-size: 17px; line-height: 24px; }
h3 { color: #0a6a9e; font-size: 15px; line-height: 20px; }
hr { height: 1px; margin: 0; border: 0; background: #d8eca4; }
.links { margin-top: 4px; padding-left: 11px; font-weight: bold; }
.links li { display: flex; padding: 5px 0; line-height: 14px; }
.links li::before { content: "•"; flex: none; width: 9px; color: #0a6a9e; }
.more { padding-right: 13px; text-align: right; font-size: 11px; line-height: 20px; font-weight: bold; }
.districts { display: grid; grid-template-columns: 1fr 1fr; margin-top: 11px; }
.districts > div { padding: 0 0 6px 2px; }
.districts > div + div { padding-left: 15px; border-left: 1px solid #dfefb4; }
.next { margin-top: 8px; }
.affected { margin-top: 15px; padding-top: 12px; background: linear-gradient(#e4f3c5, rgba(253, 253, 253, 0)); }
.affected h3, .causes { padding-left: 12px; color: #419639; }
.streams { display: grid; grid-template-columns: 1fr 1fr; margin-top: 8px; font-weight: bold; line-height: 17px; }
.streams dl { display: grid; grid-template-columns: 93px 1fr; padding: 3px 0 6px 12px; }
.streams .down { grid-template-columns: 112px 1fr; padding-left: 15px; border-left: 1px solid #dfefb4; }
.primary hr { margin: 24px 0 25px 4px; }
.impairment { margin-top: 12px; }
.after-map { margin-top: 17px; }
.causes { margin-top: 38px; }
.bubbles { display: block; width: 100%; margin-bottom: 8px; }
.cause, .count { text-anchor: middle; font-size: 12px; }
.cause { fill: #f4f7f8; font-weight: bold; }
.count { fill: #b4c5ce; font-size: 11px; font-style: italic; }
.resources h3 { padding-left: 2px; }
.resources .groups { margin-top: 9px; }
.resources .links { margin-top: 5px; padding-left: 12px; }
.view-all { margin: 10px 0 15px 1px; font-size: 11px; font-weight: bold; line-height: 20px; }
.resources hr { background: #eef4cc; }
.resources hr + h3 { margin-top: 26px; }
.summary { margin-top: 8px; padding: 0 16px 0 2px; line-height: 24px; }
.resources .more { margin: 4px 0 14px; padding-right: 16px; }
.resources hr + .other { margin: 24px 0 8px; }

/* Footer */
.footer {
  display: flex;
  align-items: flex-start;
  padding: 28px 43px 31px 19px;
  background: linear-gradient(#fff 0, #fff 5px, #dededf 6px, #fff 18px, #fff 80px, #e9e8e9 100%);
}
.panel { height: 80px; background: #efeeef; }
.site-links { width: 475px; padding: 2px 0 0 11px; font-size: 11px; line-height: 24px; }
.site-links ul { display: flex; align-items: center; height: 24px; white-space: nowrap; }
.site-links li { line-height: 13px; }
.site-links li + li { margin-left: 5px; padding-left: 8px; border-left: 1px solid #8b979c; }
.site-links a { color: #3d5661; text-decoration: underline; }
.follow { margin: -15px 0 -17px 17px; padding: 15px 15px 17px 17px; border: solid #dadcdd; border-width: 0 1px; }
.follow-grid { display: grid; grid-template-columns: 109px 140px; grid-template-rows: 38px 38px; align-items: center; padding: 2px 0 0 11px; width: 260px; }
.follow a { display: flex; align-items: center; gap: 13px; white-space: nowrap; color: #0b6f9f; font-family: "Roboto Condensed", "Liberation Sans", sans-serif; font-size: 14px; font-weight: bold; }
.follow a:nth-child(even) { gap: 10px; }
.follow .email { gap: 7px; font-family: "Open Sans", "Noto Sans", sans-serif; font-size: 12px; font-weight: 400; }
.seal { display: block; margin-left: auto; line-height: 0; }
.seal-text { fill: #0a72bd; font-size: 6px; font-weight: bold; text-anchor: middle; }
```
